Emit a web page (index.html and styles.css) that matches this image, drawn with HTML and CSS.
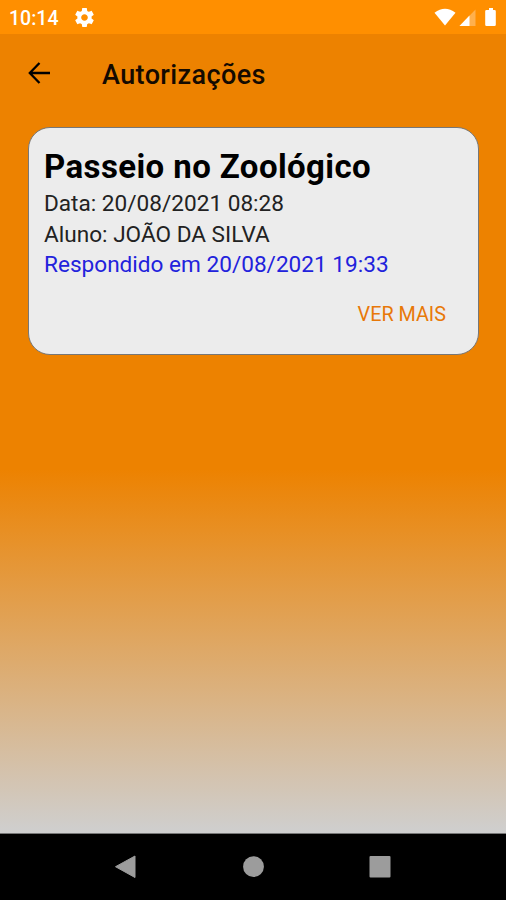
FILE: index.html
```html
<!DOCTYPE html>
<html lang="pt-BR">
<head>
    <meta charset="UTF-8">
    <meta name="viewport" content="width=device-width, initial-scale=1.0">
    <title>Autorizações</title>
    <link rel="stylesheet" href="styles.css">
</head>
<body>
    <!-- Barra de status -->
    <div class="status-bar">
        <span class="clock">10:14</span>
        <svg class="icon-gear" viewBox="2 2 20 20">
            <path fill="#fff" d="M19.43 12.98c.04-.32.07-.64.07-.98s-.03-.66-.07-.98l2.11-1.65c.19-.15.24-.42.12-.64l-2-3.46c-.12-.22-.39-.3-.61-.22l-2.49 1c-.52-.4-1.08-.73-1.69-.98l-.38-2.65C14.46 2.18 14.25 2 14 2h-4c-.25 0-.46.18-.49.42l-.38 2.65c-.61.25-1.17.59-1.69.98l-2.49-1c-.23-.09-.49 0-.61.22l-2 3.46c-.13.22-.07.49.12.64l2.11 1.65c-.04.32-.07.65-.07.98s.03.66.07.98l-2.11 1.65c-.19.15-.24.42-.12.64l2 3.46c.12.22.39.3.61.22l2.49-1c.52.4 1.08.73 1.69.98l.38 2.65c.03.24.24.42.49.42h4c.25 0 .46-.18.49-.42l.38-2.65c.61-.25 1.17-.59 1.69-.98l2.49 1c.23.09.49 0 .61-.22l2-3.46c.12-.22.07-.49-.12-.64l-2.11-1.65zM12 15.5c-1.93 0-3.5-1.57-3.5-3.5s1.57-3.5 3.5-3.5 3.5 1.57 3.5 3.5-1.57 3.5-3.5 3.5z"/>
        </svg>
        <svg class="icon-signal" viewBox="0 0 66 20">
            <path fill="#fff" d="M2.500 4.800Q13 -3.500 23.500 4.800L13 17.500z"/>
            <path fill="#fff" opacity=".3" d="M43.500 1.500V18H27.500z"/>
            <path fill="#fff" d="M37.500 7.500V18H27.500z"/>
            <path fill="#fff" d="M57 0h4v2h1.500q1.300 0 1.300 1.300v13.400q0 1.300-1.300 1.300h-8q-1.300 0-1.300-1.300V3.300q0-1.300 1.300-1.300h2.500z"/>
        </svg>
    </div>

    <div class="screen">
        <div class="header">
            <svg class="icon-back" viewBox="0 0 22 22">
                <path fill="none" stroke="#000" stroke-width="2.300" d="M22 11H2M11.500 1L1.800 11l9.700 10"/>
            </svg>
            <h1>Autorizações</h1>
        </div>

        <div class="card">
            <h2>Passeio no Zoológico</h2>
            <p class="data">Data: 20/08/2021 08:28</p>
            <p class="aluno">Aluno: JOÃO DA SILVA</p>
            <p class="respondido">Respondido em 20/08/2021 19:33</p>
            <a href="#" class="button">VER MAIS</a>
        </div>
    </div>

    <!-- Botões do Android -->
    <div class="nav-bar">
        <svg viewBox="0 0 24 24"><path fill="#9c9c9c" stroke="#9c9c9c" stroke-linejoin="round" d="M21 1v21.500L1.500 11.700z"/></svg>
        <svg viewBox="0 0 24 24"><circle cx="12.500" cy="11.700" r="10.400" fill="#9c9c9c"/></svg>
        <svg viewBox="0 0 24 24"><rect x="1.500" y="1" width="21" height="21.500" rx="1" fill="#9c9c9c"/></svg>
    </div>
</body>
</html>
```
FILE: styles.css
```css
* {
    margin: 0;
    padding: 0;
    box-sizing: border-box;
}

body {
    font-family: Roboto, sans-serif;
    background-color: #ed8200;
    color: #000;
    display: flex;
    flex-direction: column;
    height: 100vh;
    overflow: hidden;
}

.status-bar {
    display: flex;
    align-items: center;
    height: 34px;
    padding: 0 8px 0 9px;
    background-color: #ff8f00;
    color: #fff;
}

.clock {
    width: 66px;
    font-size: 19.5px;
    font-weight: 500;
    padding-top: 2px;
}

.icon-gear {
    width: 19px;
    height: 19px;
}

.icon-signal {
    width: 66px;
    height: 20px;
    margin-left: auto;
    margin-top: 2px;
}

.screen {
    flex: 1;
    background: linear-gradient(#ed8200 0, #ed8200 435px, #cfcfcf 100%);
}

.header {
    display: flex;
    align-items: center;
    height: 78px;
    padding-left: 28px;
}

.icon-back {
    width: 22px;
    height: 22px;
    margin-right: 52px;
}

h1 {
    color: #140a00;
    font-size: 27px;
    font-weight: 500;
    letter-spacing: 0.4px;
    padding-top: 3px;
}

.card {
    display: flex;
    flex-direction: column;
    height: 228px;
    margin: 15px 27px 0 28px;
    padding: 19px 32px 0 15px;
    background-color: #ececec;
    border: 1px solid #777;
    border-radius: 22px;
}

h2 {
    font-size: 33px;
    font-weight: 700;
    letter-spacing: 0.4px;
    line-height: 39px;
    margin-bottom: 3px;
    white-space: nowrap;
}

.card p {
    color: #222;
    font-size: 22.6px;
    line-height: 30.7px;
    white-space: nowrap;
}

.card .respondido {
    color: #2222dc;
}

.button {
    align-self: flex-end;
    margin-top: 22px;
    color: #e87808;
    font-size: 19.8px;
    line-height: 24px;
    text-decoration: none;
}

.nav-bar {
    display: flex;
    justify-content: center;
    align-items: center;
    gap: 103px;
    height: 67px;
    background-color: #000;
    border-top: 1px solid #777;
}

.nav-bar svg {
    width: 24px;
    height: 24px;
}
```
